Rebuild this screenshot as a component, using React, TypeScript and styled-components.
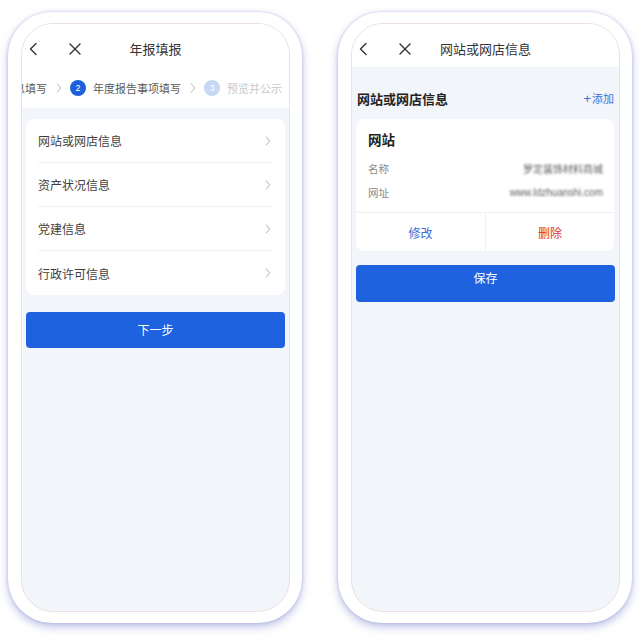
import React from "react";
import styled, { createGlobalStyle } from "styled-components";

const GlobalStyle = createGlobalStyle`
  html, body { margin: 0; padding: 0; background: #ffffff; }
  body {
    font-family: "Noto Sans CJK SC", "Noto Sans", "Liberation Sans", sans-serif;
    -webkit-font-smoothing: antialiased;
  }
  * { box-sizing: border-box; }
`;

const Page = styled.div`
  display: flex;
  gap: 36px;
  padding: 12px 0 0 8px;
  width: 640px;
  height: 636px;
`;

const PhoneFrame = styled.div`
  width: 294px;
  height: 611px;
  padding: 11px 12px 11px 13px;
  background: #ffffff;
  border-radius: 44px;
  box-shadow: 0 4px 8px rgba(125, 135, 205, 0.5), 0 0 3px rgba(125, 135, 205, 0.45);
  display: flex;
`;

const Screen = styled.div`
  flex: 1;
  border-radius: 32px;
  border: 1px solid #ece0e1;
  background: #f2f5f9;
  overflow: hidden;
  display: flex;
  flex-direction: column;
`;

const Header = styled.div`
  height: 43px;
  padding-top: 6px;
  background: #ffffff;
  display: grid;
  grid-template-columns: 1fr auto 1fr;
  align-items: center;
`;

const HeaderIcons = styled.div`
  display: flex;
  align-items: center;
  padding-left: 6px;
  gap: 29px;
`;

const IconBtn = styled.span`
  display: flex;
  align-items: center;
  justify-content: center;
  color: #333;
`;

const Title = styled.div`
  font-size: 13px;
  color: #333;
  line-height: 18px;
`;

const Steps = styled.div`
  height: 41px;
  padding: 0 7px 0 0;
  background: #ffffff;
  display: flex;
  justify-content: flex-end;
  align-items: center;
  overflow: hidden;
  white-space: nowrap;
`;

const Step = styled.div`
  display: flex;
  align-items: center;
  flex-shrink: 0;
`;

const StepNum = styled.span<{ $state: "done" | "active" | "todo" }>`
  width: 16px;
  height: 16px;
  border-radius: 50%;
  margin-right: 7px;
  display: flex;
  align-items: center;
  justify-content: center;
  font-size: 9px;
  color: #fff;
  font-family: "Liberation Sans", sans-serif;
  background: ${(p) => (p.$state === "todo" ? "#c7d7f6" : "#1e5fdc")};
`;

const StepText = styled.span<{ $state: "done" | "active" | "todo" }>`
  font-size: 11px;
  color: ${(p) => (p.$state === "todo" ? "#c9c9c9" : "#5a5a5a")};
`;

const StepArrow = styled.span`
  display: flex;
  margin: 0 8px 0 9px;
  flex-shrink: 0;
`;

const Card = styled.div`
  margin: 11px 4px 0 4px;
  background: #ffffff;
  border-radius: 8px;
  padding: 0 12px;
`;

const ListRow = styled.div`
  height: 44px;
  display: flex;
  align-items: center;
  justify-content: space-between;
  padding-right: 2px;
  border-bottom: 1px solid #f1f1f1;
  &:last-child { border-bottom: none; }
`;

const RowText = styled.span`
  font-size: 12px;
  color: #3f3f3f;
`;

const PrimaryButton = styled.div<{ $top: number; $height: number; $textTop?: number }>`
  margin: ${(p) => p.$top}px 4px 0 4px;
  height: ${(p) => p.$height}px;
  border-radius: 4px;
  background: #1f62df;
  color: #ffffff;
  font-size: 12px;
  display: flex;
  justify-content: center;
  align-items: ${(p) => (p.$textTop ? "flex-start" : "center")};
  padding-top: ${(p) => p.$textTop ?? 0}px;
  line-height: 20px;
`;

const SectionHead = styled.div`
  margin: 20px 5px 0 5px;
  height: 22px;
  display: flex;
  align-items: center;
  justify-content: space-between;
`;

const SectionTitle = styled.span`
  font-size: 13px;
  font-weight: 700;
  color: #222;
`;

const AddLink = styled.span`
  font-size: 11px;
  color: #3a6fd9;
  display: flex;
  align-items: center;
`;

const Plus = styled.span`
  font-size: 13px;
  line-height: 1;
  margin-right: 1px;
  font-family: "Liberation Sans", sans-serif;
`;

const InfoCard = styled.div`
  margin: 10px 5px 0 4px;
  background: #ffffff;
  border-radius: 8px;
  overflow: hidden;
`;

const InfoBody = styled.div`
  padding: 10px 11px 8px 12px;
`;

const InfoTitle = styled.div`
  font-size: 13.5px;
  font-weight: 700;
  color: #222;
  line-height: 20px;
  margin-bottom: 7px;
`;

const InfoRow = styled.div`
  height: 24px;
  display: flex;
  align-items: center;
  justify-content: space-between;
`;

const InfoLabel = styled.span`
  font-size: 10.5px;
  color: #8a8a8a;
`;

const InfoValue = styled.span`
  font-size: 10px;
  color: #5e5e5e;
  filter: blur(1.2px);
  font-family: "Liberation Sans", "Noto Sans CJK SC", sans-serif;
`;

const Actions = styled.div`
  display: grid;
  grid-template-columns: 1fr 1fr;
  border-top: 1px solid #f0f0f0;
  height: 39px;
`;

const ActionBtn = styled.div<{ $danger?: boolean }>`
  display: flex;
  align-items: center;
  justify-content: center;
  font-size: 12px;
  color: ${(p) => (p.$danger ? "#dc3128" : "#3a6fd9")};
  & + & { border-left: 1px solid #f0f0f0; }
`;

const BackIcon = () => (
  <svg width="12" height="14" viewBox="0 0 12 14" fill="none">
    <path d="M8 1.5 L2.5 7 L8 12.5" stroke="#333" strokeWidth="1.4" strokeLinecap="round" strokeLinejoin="round" />
  </svg>
);

const CloseIcon = () => (
  <svg width="12" height="12" viewBox="0 0 12 12" fill="none">
    <path d="M1 1 L11 11 M11 1 L1 11" stroke="#333" strokeWidth="1.4" strokeLinecap="round" />
  </svg>
);

const Chevron = ({ color = "#bdbdbd" }: { color?: string }) => (
  <svg width="6" height="10" viewBox="0 0 6 10" fill="none">
    <path d="M1.2 1 L4.8 5 L1.2 9" stroke={color} strokeWidth="1.1" strokeLinecap="round" strokeLinejoin="round" />
  </svg>
);

const NavHeader = ({ title }: { title: string }) => (
  <Header>
    <HeaderIcons>
      <IconBtn><BackIcon /></IconBtn>
      <IconBtn><CloseIcon /></IconBtn>
    </HeaderIcons>
    <Title>{title}</Title>
    <div />
  </Header>
);

const steps: { n: number; label: string; state: "done" | "active" | "todo" }[] = [
  { n: 1, label: "基本信息填写", state: "done" },
  { n: 2, label: "年度报告事项填写", state: "active" },
  { n: 3, label: "预览并公示", state: "todo" },
];

const listItems = ["网站或网店信息", "资产状况信息", "党建信息", "行政许可信息"];

export default function App() {
  return (
    <>
      <GlobalStyle />
      <Page>
        <PhoneFrame>
          <Screen>
            <NavHeader title="年报填报" />
            <Steps>
              {steps.map((s, i) => (
                <React.Fragment key={s.n}>
                  {i > 0 && (
                    <StepArrow>
                      <Chevron color="#c4c4c4" />
                    </StepArrow>
                  )}
                  <Step>
                    {i > 0 && <StepNum $state={s.state}>{s.n}</StepNum>}
                    <StepText $state={s.state}>{s.label}</StepText>
                  </Step>
                </React.Fragment>
              ))}
            </Steps>
            <Card>
              {listItems.map((t) => (
                <ListRow key={t}>
                  <RowText>{t}</RowText>
                  <Chevron />
                </ListRow>
              ))}
            </Card>
            <PrimaryButton $top={17} $height={36}>下一步</PrimaryButton>
          </Screen>
        </PhoneFrame>

        <PhoneFrame>
          <Screen>
            <NavHeader title="网站或网店信息" />
            <SectionHead>
              <SectionTitle>网站或网店信息</SectionTitle>
              <AddLink><Plus>+</Plus>添加</AddLink>
            </SectionHead>
            <InfoCard>
              <InfoBody>
                <InfoTitle>网站</InfoTitle>
                <InfoRow>
                  <InfoLabel>名称</InfoLabel>
                  <InfoValue>罗定装饰材料商城</InfoValue>
                </InfoRow>
                <InfoRow>
                  <InfoLabel>网址</InfoLabel>
                  <InfoValue>www.ldzhuanshi.com</InfoValue>
                </InfoRow>
              </InfoBody>
              <Actions>
                <ActionBtn>修改</ActionBtn>
                <ActionBtn $danger>删除</ActionBtn>
              </Actions>
            </InfoCard>
            <PrimaryButton $top={14} $height={37} $textTop={3}>保存</PrimaryButton>
          </Screen>
        </PhoneFrame>
      </Page>
    </>
  );
}
